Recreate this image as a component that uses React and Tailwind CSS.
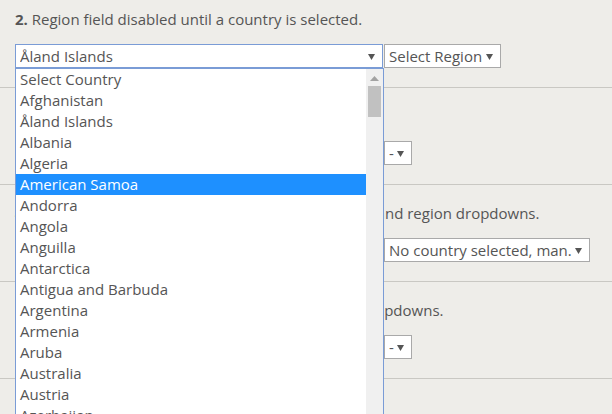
const countries = [
  "Select Country",
  "Afghanistan",
  "Åland Islands",
  "Albania",
  "Algeria",
  "American Samoa",
  "Andorra",
  "Angola",
  "Anguilla",
  "Antarctica",
  "Antigua and Barbuda",
  "Argentina",
  "Armenia",
  "Aruba",
  "Australia",
  "Austria",
  "Azerbaijan",
  "Bahamas",
];

function Arrow() {
  return (
    <svg width="7" height="7" viewBox="0 0 7 7" className="shrink-0">
      <polygon points="0,1 7,1 3.5,7" fill="#555" />
    </svg>
  );
}

function Select({ value, width, focused }) {
  return (
    <div
      className={`h-[24px] ${width} flex items-center justify-between pl-[4px] pr-[7px] bg-white border ${
        focused ? "border-[#7a9cd6]" : "border-[#a9a9a9]"
      }`}
    >
      <span className="truncate leading-[20px]">{value}</span>
      <Arrow />
    </div>
  );
}

function Section({ first, text, region, regionWidth }) {
  return (
    <div
      className={`px-[15px] pb-[19px] border-b border-[#c9c8c3] ${first ? "pt-[9px]" : "pt-[18px]"}`}
    >
      <p className="leading-[20px] whitespace-nowrap">{text}</p>
      <div className="mt-[15px] flex gap-[1px]">
        <Select value="Åland Islands" width="w-[368px]" focused={first} />
        <Select value={region} width={regionWidth} />
      </div>
    </div>
  );
}

export default function App() {
  return (
    <div className="relative h-[414px] overflow-hidden bg-[#eeede9] text-[15px] text-[#555] font-['Open_Sans',sans-serif]">
      <Section
        first
        text={<><b>2.</b> Region field disabled until a country is selected.</>}
        region="Select Region"
        regionWidth="w-[117px]"
      />
      <Section
        text={<><b>3.</b> Region list updated on change.</>}
        region="-"
        regionWidth="w-[28px]"
      />
      <Section
        text={<><b>4.</b> Default option text replaced for both the country and region dropdowns.</>}
        region="No country selected, man."
        regionWidth="w-[206px]"
      />
      <Section
        text={<><b>5.</b> Blank option added for the country and region dropdowns.</>}
        region="-"
        regionWidth="w-[28px]"
      />

      {/* open country list */}
      <div className="absolute left-[15px] top-[68px] w-[369px] h-[360px] flex bg-white border border-[#7a9cd6]">
        <ul className="flex-1">
          {countries.map((c) => (
            <li
              key={c}
              className={`h-[21px] leading-[21px] pl-[4px] whitespace-nowrap ${
                c === "American Samoa" ? "bg-[#1e90ff] text-white" : ""
              }`}
            >
              {c}
            </li>
          ))}
        </ul>
        <div className="w-[17px] bg-[#f0f0f0] flex flex-col items-center">
          <svg width="9" height="5" viewBox="0 0 9 5" className="mt-[7px]">
            <polygon points="0,5 9,5 4.5,0" fill="#a3a3a3" />
          </svg>
          <div className="mt-[5px] w-[13px] h-[31px] bg-[#c1c1c1]" />
        </div>
      </div>
    </div>
  );
}
